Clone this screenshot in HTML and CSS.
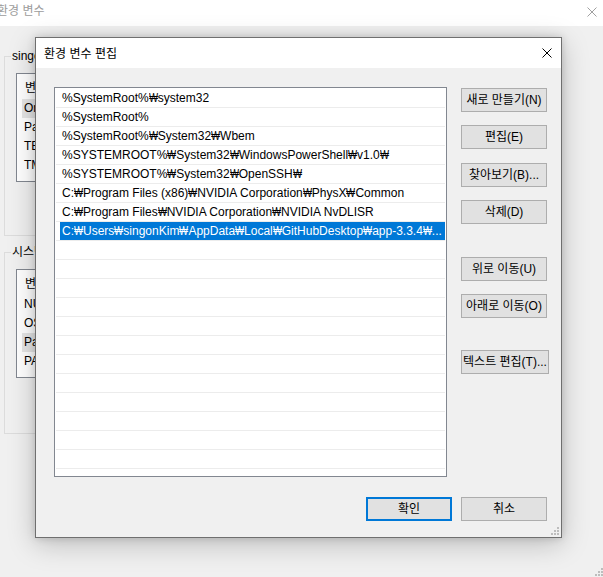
FILE: index.html
```html
<!DOCTYPE html>
<html lang="ko">
<head>
<meta charset="utf-8">
<title>환경 변수 편집</title>
<link rel="stylesheet" href="styles.css">
</head>
<body>
<div class="bgwin">
  <div class="bg-title">
    <span class="bg-title-text">환경 변수</span>
    <svg class="bg-close" width="10" height="10" viewBox="0 0 10 10"><path d="M0.5 0.5L9.5 9.5M9.5 0.5L0.5 9.5" stroke="#a0a0a0" stroke-width="1" fill="none"/></svg>
  </div>
  <div class="bg-body">
    <fieldset class="group g1">
      <legend>singonKim에 대한 사용자 변수(U)</legend>
      <div class="lv">
        <div class="lv-head">변수</div>
        <div class="lv-row hl">OneDrive</div>
        <div class="lv-row">Path</div>
        <div class="lv-row">TEMP</div>
        <div class="lv-row">TMP</div>
      </div>
    </fieldset>
    <fieldset class="group g2">
      <legend>시스템 변수(S)</legend>
      <div class="lv">
        <div class="lv-head">변수</div>
        <div class="lv-row">NUMBER_OF_PROCESSORS</div>
        <div class="lv-row">OS</div>
        <div class="lv-row hl">Path</div>
        <div class="lv-row">PATHEXT</div>
      </div>
    </fieldset>
  </div>
  <svg class="grip bg-grip" width="8" height="8" viewBox="0 0 8 8"><rect x="6" y="0" width="2" height="2"/><rect x="3" y="3" width="2" height="2"/><rect x="6" y="3" width="2" height="2"/><rect x="0" y="6" width="2" height="2"/><rect x="3" y="6" width="2" height="2"/><rect x="6" y="6" width="2" height="2"/></svg>
</div>

<div class="dialog">
  <div class="dlg-title">
    <span class="dlg-title-text">환경 변수 편집</span>
    <svg class="dlg-close" width="10" height="10" viewBox="0 0 10 10"><path d="M0.5 0.5L9.5 9.5M9.5 0.5L0.5 9.5" stroke="#000" stroke-width="1" fill="none"/></svg>
  </div>
  <div class="dlg-body">
    <div class="dlg-main">
      <div class="pathlist">
        <div class="prow"><span class="pcell">%SystemRoot%<span class="won">₩</span>system32</span></div>
        <div class="prow"><span class="pcell">%SystemRoot%</span></div>
        <div class="prow"><span class="pcell">%SystemRoot%<span class="won">₩</span>System32<span class="won">₩</span>Wbem</span></div>
        <div class="prow"><span class="pcell">%SYSTEMROOT%<span class="won">₩</span>System32<span class="won">₩</span>WindowsPowerShell<span class="won">₩</span>v1.0<span class="won">₩</span></span></div>
        <div class="prow"><span class="pcell">%SYSTEMROOT%<span class="won">₩</span>System32<span class="won">₩</span>OpenSSH<span class="won">₩</span></span></div>
        <div class="prow"><span class="pcell">C:<span class="won">₩</span>Program Files (x86)<span class="won">₩</span>NVIDIA Corporation<span class="won">₩</span>PhysX<span class="won">₩</span>Common</span></div>
        <div class="prow"><span class="pcell">C:<span class="won">₩</span>Program Files<span class="won">₩</span>NVIDIA Corporation<span class="won">₩</span>NVIDIA NvDLISR</span></div>
        <div class="prow sel"><span class="pcell">C:<span class="won">₩</span>Users<span class="won">₩</span>singonKim<span class="won">₩</span>AppData<span class="won">₩</span>Local<span class="won">₩</span>GitHubDesktop<span class="won">₩</span>app-3.3.4<span class="won">₩</span>...</span></div>
        <div class="prow"><span class="pcell"></span></div>
        <div class="prow"><span class="pcell"></span></div>
        <div class="prow"><span class="pcell"></span></div>
        <div class="prow"><span class="pcell"></span></div>
        <div class="prow"><span class="pcell"></span></div>
        <div class="prow"><span class="pcell"></span></div>
        <div class="prow"><span class="pcell"></span></div>
        <div class="prow"><span class="pcell"></span></div>
        <div class="prow"><span class="pcell"></span></div>
        <div class="prow"><span class="pcell"></span></div>
        <div class="prow"><span class="pcell"></span></div>
        <div class="prow"><span class="pcell"></span></div>
        <div class="prow"><span class="pcell"></span></div>
      </div>
      <div class="btncol">
        <button class="btn">새로 만들기(N)</button>
        <button class="btn">편집(E)</button>
        <button class="btn mt14">찾아보기(B)...</button>
        <button class="btn">삭제(D)</button>
        <button class="btn mt33">위로 이동(U)</button>
        <button class="btn">아래로 이동(O)</button>
        <button class="btn wide mt32">텍스트 편집(T)...</button>
      </div>
    </div>
    <div class="dlg-foot">
      <button class="btn default">확인</button>
      <button class="btn">취소</button>
    </div>
    <svg class="grip dlg-grip" width="8" height="8" viewBox="0 0 8 8"><rect x="6" y="0" width="2" height="2"/><rect x="3" y="3" width="2" height="2"/><rect x="6" y="3" width="2" height="2"/><rect x="0" y="6" width="2" height="2"/><rect x="3" y="6" width="2" height="2"/><rect x="6" y="6" width="2" height="2"/></svg>
  </div>
</div>
</body>
</html>
```

FILE: styles.css
```css
* { box-sizing: border-box; }
html, body { margin: 0; padding: 0; }
body {
  width: 603px;
  height: 577px;
  overflow: hidden;
  position: relative;
  background: #f0f0f0;
  color: #000;
  font-family: "Liberation Sans", "Noto Sans", "Noto Sans CJK KR", sans-serif;
  font-size: 12px;
}

/* background window */
.bgwin {
  position: relative;
  height: 577px;
  display: flex;
  flex-direction: column;
}
.bg-title {
  height: 26px;
  flex: none;
  background: #fff;
  display: flex;
  align-items: flex-start;
  justify-content: space-between;
  padding: 2px 6px 0 0;
}
.bg-title-text {
  margin-left: -3px;
  color: #9c9c9c;
  line-height: 16px;
  font-family: "Noto Sans CJK KR", sans-serif;
}
.bg-close { margin-top: 5px; }
.bg-body {
  flex: 1;
  padding: 22px 0 0 4px;
  overflow: hidden;
}
.group {
  margin: 0;
  width: 530px;
  min-width: 0;
  border: 1px solid #dcdcdc;
  padding: 9px 11px 53px 11px;
}
.group legend {
  margin-left: -5px;
  padding: 0 1px;
  line-height: 16px;
  font-size: 12px;
  white-space: nowrap;
}
.g2 {
  margin-top: 8px;
  padding-bottom: 55px;
}
.lv {
  width: 500px;
  height: 109px;
  border: 1px solid #828790;
  background: #fff;
  overflow: hidden;
}
.lv-head {
  height: 25px;
  line-height: 25px;
  padding-left: 8px;
  font-family: "Noto Sans CJK KR", sans-serif;
}
.lv-row {
  height: 19px;
  line-height: 19px;
  margin-left: 5px;
  padding-left: 2px;
  white-space: nowrap;
}
.lv-row.hl { background: #e5e5e5; }

.grip { fill: #bdbdbd; position: absolute; }
.bg-grip { right: 0; bottom: 1px; }

/* dialog */
.dialog {
  position: absolute;
  left: 35px;
  top: 37px;
  width: 527px;
  height: 501px;
  border: 1px solid #6f6f6f;
  background: #f0f0f0;
  box-shadow: 0 6px 26px rgba(0, 0, 0, 0.22), 0 0 8px rgba(0, 0, 0, 0.16);
  display: flex;
  flex-direction: column;
}
.dlg-title {
  height: 30px;
  flex: none;
  background: #fff;
  display: flex;
  align-items: center;
  justify-content: space-between;
  padding: 0 9px 0 8px;
}
.dlg-title-text {
  font-family: "Noto Sans CJK KR", sans-serif;
  line-height: 16px;
}
.dlg-body {
  position: relative;
  flex: 1;
  padding: 19px 14px 0 18px;
  display: flex;
  flex-direction: column;
}
.dlg-main {
  display: flex;
  align-items: flex-start;
  gap: 14px;
}
.pathlist {
  flex: none;
  width: 393px;
  height: 390px;
  border: 1px solid #828790;
  background: #fff;
  padding: 1px 1px 0;
  overflow: hidden;
}
.prow {
  height: 19px;
  border-bottom: 1px solid #ececec;
}
.pcell {
  display: block;
  height: 18px;
  line-height: 18px;
  margin-left: 4px;
  padding: 0 2px;
  white-space: nowrap;
  overflow: hidden;
}
.won {
  display: inline-block;
  width: 9px;
  transform: scaleX(0.8);
  transform-origin: 0 50%;
}
.prow.sel .pcell {
  background: #0078d7;
  color: #fff;
}
.btncol {
  flex: none;
  display: flex;
  flex-direction: column;
  align-items: flex-start;
  padding-top: 1px;
}
.btn {
  width: 86px;
  height: 24px;
  margin: 0;
  padding: 0;
  border: 1px solid #adadad;
  background: #e1e1e1;
  color: #000;
  font: inherit;
  font-size: 12px;
  line-height: 16px;
  white-space: nowrap;
  display: flex;
  align-items: center;
  justify-content: center;
}
.btncol .btn + .btn { margin-top: 13px; }
.btncol .btn.mt14 { margin-top: 14px; }
.btncol .btn.mt33 { margin-top: 33px; }
.btncol .btn.mt32 { margin-top: 32px; }
.btn.wide { width: 88px; }
.btn.default { border: 2px solid #0078d7; }
.dlg-foot {
  display: flex;
  justify-content: flex-end;
  gap: 9px;
  margin-top: 20px;
}
.dlg-grip { right: 2px; bottom: 2px; }
```
